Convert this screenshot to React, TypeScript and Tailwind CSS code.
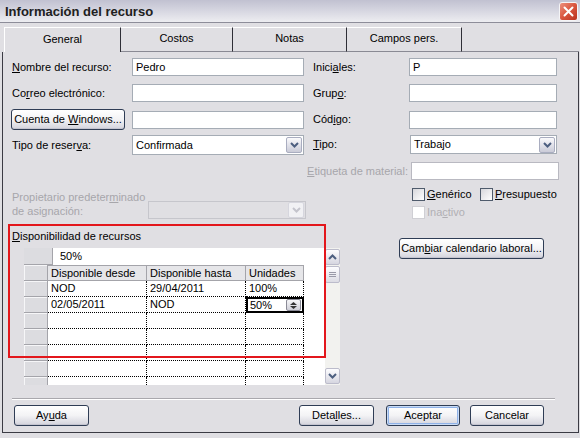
import React from "react";

function Chevron({ up = false, color = "#4d5f80" }: { up?: boolean; color?: string }) {
  return (
    <svg width="9" height="6" viewBox="0 0 9 6">
      <path d={up ? "M1 5 L4.5 1.5 L8 5" : "M1 1 L4.5 4.5 L8 1"} fill="none" stroke={color} strokeWidth="2" />
    </svg>
  );
}

function DropBtn({ disabled = false }: { disabled?: boolean }) {
  return (
    <div
      className={
        disabled
          ? "flex h-[16px] w-[16px] shrink-0 items-center justify-center rounded-[2px] border border-[#d6d6de] bg-[#f1f1f4]"
          : "flex h-[16px] w-[16px] shrink-0 items-center justify-center rounded-[2px] border border-[#a9adc0] bg-gradient-to-b from-[#fafafc] to-[#cacbd8]"
      }
    >
      <Chevron color={disabled ? "#c4c4cc" : "#4d5f80"} />
    </div>
  );
}

function Btn({ children, className = "", def = false }: { children: React.ReactNode; className?: string; def?: boolean }) {
  return (
    <div
      className={`flex h-[21px] shrink-0 items-center justify-center rounded-[3px] border border-[#2f3d55] bg-gradient-to-b from-white via-[#f3f3f5] to-[#d3d3dc] ${
        def ? "shadow-[inset_0_0_0_1px_#c9dbf5,inset_0_0_0_2px_#8fb2e8]" : "shadow-[inset_0_-1px_0_#c4c4cf]"
      } ${className}`}
    >
      <span className="whitespace-pre">{children}</span>
    </div>
  );
}

function Check({ label, disabled = false }: { label: React.ReactNode; disabled?: boolean }) {
  return (
    <div className="flex items-center">
      <div
        className={
          disabled
            ? "h-[13px] w-[13px] shrink-0 border border-[#cfcfd4] bg-white"
            : "h-[13px] w-[13px] shrink-0 border border-[#4f5b6c] bg-gradient-to-br from-[#d7d7dc] to-white"
        }
      />
      <span className={disabled ? "ml-[2px] text-[#b0afb4]" : "ml-[2px]"}>{label}</span>
    </div>
  );
}

const rows: [string, string, string][] = [
  ["NOD", "29/04/2011", "100%"],
  ["02/05/2011", "NOD", "50%"],
  ["", "", ""],
  ["", "", ""],
  ["", "", ""],
  ["", "", ""],
  ["", "", ""],
];

function RowHead() {
  return <div className="w-[24px] shrink-0 border-b border-r border-[#a4a4aa] bg-[#dcdce0] shadow-[inset_1px_1px_0_#f6f6f8]" />;
}

function Grid() {
  return (
    <div className="ml-[12px] mt-[5px] flex h-[137px] w-[316px] shrink-0 overflow-hidden">
      <div className="flex w-[301px] flex-col bg-white">
        <div className="flex h-[17px] shrink-0">
          <div className="w-[29px] border-b border-r border-[#a4a4aa] bg-[#dcdce0]" />
          <div className="flex items-center pl-[7px]">50%</div>
        </div>
        <div className="flex h-[16px] shrink-0">
          <RowHead />
          <div className="flex w-[99px] items-center border-b border-r border-t border-[#a4a4aa] bg-[#e6e6e9] pl-[3px]">Disponible desde</div>
          <div className="flex w-[99px] items-center border-b border-r border-t border-[#a4a4aa] bg-[#e6e6e9] pl-[3px]">Disponible hasta</div>
          <div className="flex w-[58px] items-center border-b border-r border-t border-[#a4a4aa] bg-[#e6e6e9] pl-[3px]">Unidades</div>
        </div>
        {rows.map((r, i) => (
          <div key={i} className="flex h-[16px] shrink-0">
            <RowHead />
            <div className="flex w-[99px] items-center border-b border-r border-dotted border-black pl-[3px]">{r[0]}</div>
            <div className="flex w-[99px] items-center border-b border-r border-dotted border-black pl-[3px]">{r[1]}</div>
            {i === 1 ? (
              <div className="flex w-[58px] items-center justify-between border-2 border-black pl-[2px] pr-[1px]">
                <span>{r[2]}</span>
                <div className="flex h-[12px] w-[15px] flex-col items-center justify-center gap-[1px] rounded-[2px] border border-[#8a8a96] bg-gradient-to-b from-[#f6f6f8] to-[#cfcfd8]">
                  <svg width="7" height="3" viewBox="0 0 7 3"><path d="M0 3 L3.5 0 L7 3 Z" fill="#333" /></svg>
                  <svg width="7" height="3" viewBox="0 0 7 3"><path d="M0 0 L3.5 3 L7 0 Z" fill="#333" /></svg>
                </div>
              </div>
            ) : (
              <div className="flex w-[58px] items-center border-b border-r border-dotted border-black pl-[3px]">{r[2]}</div>
            )}
          </div>
        ))}
      </div>
      <div className="flex w-[15px] flex-col bg-[#f2f2ef]">
        <div className="mt-[1px] flex h-[16px] items-center justify-center rounded-[2px] border border-[#bcbccb] bg-gradient-to-b from-[#fdfdff] to-[#d6d6e0]">
          <Chevron up />
        </div>
        <div className="mt-[1px] flex h-[17px] items-center justify-center rounded-[2px] border border-[#bcbccb] bg-gradient-to-b from-[#fdfdff] to-[#dcdce4]">
          <svg width="7" height="7" viewBox="0 0 7 7">
            <path d="M0 1.5 H7 M0 3.5 H7 M0 5.5 H7" stroke="#9a9aa8" strokeWidth="1" />
          </svg>
        </div>
        <div className="flex-1" />
        <div className="mb-[1px] flex h-[16px] items-center justify-center rounded-[2px] border border-[#bcbccb] bg-gradient-to-b from-[#fdfdff] to-[#d6d6e0]">
          <Chevron />
        </div>
      </div>
    </div>
  );
}

export default function App() {
  return (
    <div className="h-[438px] w-[580px] select-none overflow-hidden bg-[#e0dfe3] font-['Liberation_Sans',Arial,sans-serif] text-[11px] leading-none text-black">
      {/* title bar */}
      <div className="flex h-[23px] items-center justify-between border-b border-[#8d8d99] bg-gradient-to-b from-[#c1c1d1] to-[#ededf1] pl-[5px] pr-[2px]">
        <span className="text-[13px] font-bold text-[#202020]">Información del recurso</span>
        <div className="flex h-[19px] w-[19px] items-center justify-center rounded-[3px] border border-[#f4f4f6] bg-gradient-to-br from-[#ec8f7c] via-[#d9553f] to-[#b9321f]">
          <svg width="11" height="11" viewBox="0 0 11 11">
            <path d="M1.5 1.5 L9.5 9.5 M9.5 1.5 L1.5 9.5" stroke="white" strokeWidth="2" strokeLinecap="round" />
          </svg>
        </div>
      </div>

      {/* tabs */}
      <div className="flex h-[29px] items-end pl-[4px]">
        <div className="flex h-[25px] w-[117px] items-center justify-center border-l border-r border-t border-l-white border-r-[#2e2e36] border-t-white pb-[2px]">General</div>
        <div className="flex h-[25px] w-[112px] items-center justify-center border-b border-r border-t border-b-[#8a8a94] border-r-[#2e2e36] border-t-white pb-[2px]">Costos</div>
        <div className="flex h-[25px] w-[114px] items-center justify-center border-b border-r border-t border-b-[#8a8a94] border-r-[#2e2e36] border-t-white pb-[2px]">Notas</div>
        <div className="flex h-[25px] w-[115px] items-center justify-center border-b border-r border-t border-b-[#8a8a94] border-r-[#2e2e36] border-t-white pb-[2px]">Campos pers.</div>
        <div className="mr-[1px] h-[25px] flex-1 border-b border-[#8a8a94]" />
      </div>

      {/* panel */}
      <div className="relative ml-[2px] flex h-[381px] w-[577px] flex-col border-b border-l border-r border-[#3b3b44] pl-[9px] pt-[6px]">
        {/* row A */}
        <div className="flex h-[18px] shrink-0 items-center">
          <div className="flex w-[292px] shrink-0 items-center">
            <span className="w-[120px] shrink-0"><span className="underline">N</span>ombre del recurso:</span>
            <div className="flex h-[18px] w-[172px] items-center border border-[#a5acb5] bg-white pl-[3px]">Pedro</div>
          </div>
          <div className="ml-[9px] flex items-center">
            <span className="w-[96px] shrink-0">Inici<span className="underline">a</span>les:</span>
            <div className="flex h-[18px] w-[148px] items-center border border-[#a5acb5] bg-white pl-[3px]">P</div>
          </div>
        </div>
        {/* row B */}
        <div className="mt-[8px] flex h-[18px] shrink-0 items-center">
          <div className="flex w-[292px] shrink-0 items-center">
            <span className="w-[120px] shrink-0">Co<span className="underline">r</span>reo electrónico:</span>
            <div className="h-[18px] w-[172px] border border-[#a5acb5] bg-white" />
          </div>
          <div className="ml-[9px] flex items-center">
            <span className="w-[96px] shrink-0">Grup<span className="underline">o</span>:</span>
            <div className="h-[18px] w-[148px] border border-[#a5acb5] bg-white" />
          </div>
        </div>
        {/* row C */}
        <div className="mt-[8px] flex h-[19px] shrink-0 items-center">
          <div className="flex w-[292px] shrink-0 items-center">
            <Btn className="-ml-[1px] h-[19px] w-[114px]">
              Cuenta de <span className="underline">W</span>indows...
            </Btn>
            <div className="ml-[7px] h-[18px] w-[172px] border border-[#a5acb5] bg-white" />
          </div>
          <div className="ml-[9px] flex items-center">
            <span className="w-[96px] shrink-0">Cód<span className="underline">i</span>go:</span>
            <div className="h-[18px] w-[148px] border border-[#a5acb5] bg-white" />
          </div>
        </div>
        {/* row D */}
        <div className="mt-[6px] flex h-[20px] shrink-0 items-center">
          <div className="flex w-[292px] shrink-0 items-center">
            <span className="w-[120px] shrink-0">Tipo de reser<span className="underline">v</span>a:</span>
            <div className="flex h-[20px] w-[172px] items-center border border-[#a5acb5] bg-white pl-[3px] pr-[1px]">
              <span className="flex-1">Confirmada</span>
              <DropBtn />
            </div>
          </div>
          <div className="ml-[9px] flex items-center self-start">
            <span className="w-[97px] shrink-0"><span className="underline">T</span>ipo:</span>
            <div className="flex h-[19px] w-[147px] items-center border border-[#a5acb5] bg-white pl-[3px] pr-[1px]">
              <span className="flex-1">Trabajo</span>
              <DropBtn />
            </div>
          </div>
        </div>
        {/* row E */}
        <div className="mt-[7px] flex h-[18px] shrink-0 items-center">
          <div className="w-[292px] shrink-0" />
          <div className="ml-[9px] flex items-center">
            <div className="flex w-[95px] shrink-0 justify-end whitespace-nowrap text-[#a7a6ab]">
              <span><span className="underline">E</span>tiqueta de material:</span>
            </div>
            <div className="ml-[3px] h-[18px] w-[148px] border border-[#b9b9c1] bg-white" />
          </div>
        </div>
        {/* row F */}
        <div className="mt-[8px] flex h-[31px] shrink-0">
          <div className="flex w-[292px] shrink-0 items-end">
            <div className="w-[136px] shrink-0 pb-[1px] leading-[14px] text-[#a7a6ab]">
              Propietario predeter<span className="underline">m</span>inado
              <br />
              de asignación:
            </div>
            <div className="flex h-[18px] w-[158px] shrink-0 items-center justify-end border border-[#c6c6cc] pr-[1px]">
              <DropBtn disabled />
            </div>
          </div>
          <div className="ml-[9px] flex flex-col pl-[99px]">
            <div className="flex h-[13px] items-center">
              <div className="w-[68px]">
                <Check label={<><span className="underline">G</span>enérico</>} />
              </div>
              <Check label={<><span className="underline">P</span>resupuesto</>} />
            </div>
            <div className="mt-[5px] flex h-[13px] items-center">
              <Check disabled label={<>Ina<span className="underline">c</span>tivo</>} />
            </div>
          </div>
        </div>
        {/* row G */}
        <div className="flex h-[166px] shrink-0">
          <div className="flex w-[328px] shrink-0 flex-col">
            <div className="mt-[11px] h-[13px] leading-[13px]">
              <span className="underline">D</span>isponibilidad de recursos
            </div>
            <Grid />
          </div>
          <div className="ml-[59px] mt-[19px]">
            <Btn className="w-[145px]">
              Cam<span className="underline">b</span>iar calendario laboral...
            </Btn>
          </div>
        </div>
        {/* separator */}
        <div className="mt-[13px] h-[2px] w-[543px] shrink-0 border-b border-t border-b-white border-t-[#a9a8ad]" />
        {/* buttons */}
        <div className="mt-[5px] flex h-[21px] shrink-0">
          <Btn className="ml-[2px] w-[75px]">
            Ay<span className="underline">u</span>da
          </Btn>
          <Btn className="ml-[210px] w-[75px]">
            Deta<span className="underline">l</span>les...
          </Btn>
          <Btn def className="ml-[12px] w-[74px]">
            Aceptar
          </Btn>
          <Btn className="ml-[10px] w-[74px]">Cancelar</Btn>
        </div>

        {/* red annotation box */}
        <div className="pointer-events-none absolute left-[5px] top-[172px] h-[134px] w-[318px] border-2 border-[#e3171c]" />
      </div>
    </div>
  );
}
